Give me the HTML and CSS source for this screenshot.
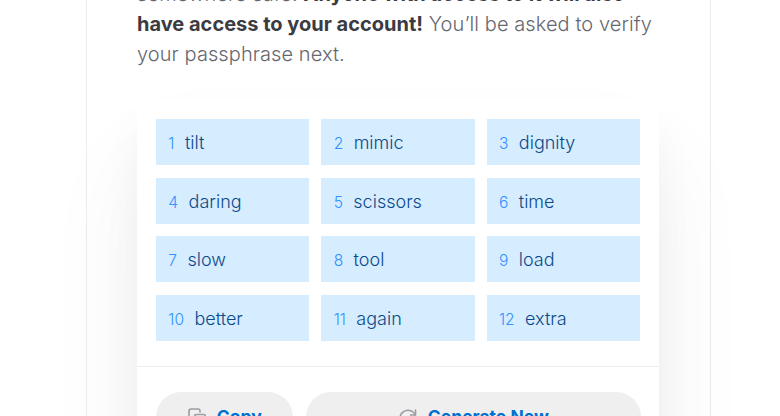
FILE: index.html
```html
<!DOCTYPE html>
<html lang="en">
<head>
<meta charset="utf-8">
<title>Passphrase</title>
<link rel="stylesheet" href="styles.css">
</head>
<body>
<main class="column">
  <p class="intro">somewhere safe. <strong>Anyone with access to it will also<br>have access to your account!</strong> You’ll be asked to verify<br>your passphrase next.</p>
  <section class="card">
    <ol class="words">
      <li class="word"><span class="num">1</span>tilt</li>
      <li class="word"><span class="num">2</span>mimic</li>
      <li class="word"><span class="num">3</span>dignity</li>
      <li class="word"><span class="num">4</span>daring</li>
      <li class="word"><span class="num">5</span>scissors</li>
      <li class="word"><span class="num">6</span>time</li>
      <li class="word"><span class="num">7</span>slow</li>
      <li class="word"><span class="num">8</span>tool</li>
      <li class="word"><span class="num">9</span>load</li>
      <li class="word"><span class="num">10</span>better</li>
      <li class="word"><span class="num">11</span>again</li>
      <li class="word"><span class="num">12</span>extra</li>
    </ol>
    <div class="actions">
      <button class="btn btn-copy">
        <svg class="icon" viewBox="0 0 18 18"><path d="M4.500 12H3A2 2 0 0 1 1 10V3A2 2 0 0 1 3 1H10A2 2 0 0 1 12 3V4"/><rect x="6.500" y="6.500" width="11" height="11" rx="2"/></svg>
        Copy
      </button>
      <button class="btn btn-generate">
        <svg class="icon" viewBox="0 0 18 18"><path d="M16.500 2V7H11.500"/><path d="M16.300 7A8 8 0 1 0 17 11"/></svg>
        Generate New
      </button>
    </div>
  </section>
</main>
</body>
</html>
```

FILE: styles.css
```css
* { box-sizing: border-box; }
body {
  margin: 0;
  height: 416px;
  overflow: hidden;
  background: #fff;
  font-family: Inter, "Liberation Sans", sans-serif;
}
.column {
  display: flow-root;
  width: 625px;
  height: 416px;
  margin-left: 86px;
  border: solid #ededed;
  border-width: 0 1px;
  padding: 0 50px;
}
.intro {
  margin: -21px 0 31px;
  color: #67676f;
  font-size: 20px;
  font-weight: 300;
  letter-spacing: .08px;
  line-height: 30px;
  white-space: nowrap;
}
.intro strong { color: #3b3b42; font-weight: 700; letter-spacing: 0; }
.card {
  width: 522px;
  height: 370px;
  border-radius: 6px;
  background: #fff;
  box-shadow: 0 60px 100px rgba(0, 0, 0, .06), 0 30px 40px rgba(0, 0, 0, .045);
}
.words {
  display: grid;
  grid-template-columns: repeat(3, 1fr);
  gap: 12.500px 12px;
  margin: 0;
  padding: 19px 19px 25px;
  list-style: none;
  border-bottom: 1px solid #ededed;
}
.word {
  display: flex;
  align-items: baseline;
  gap: 10.500px;
  height: 46px;
  padding-left: 12.300px;
  background: #d6ecff;
  color: #0b4a8a;
  font-size: 18px;
  font-weight: 300;
  line-height: 47px;
}
.num { color: #2f90ff; font-size: 15.500px; }
.actions {
  display: flex;
  gap: 13px;
  padding: 25px 18px 0 19px;
}
.btn {
  display: flex;
  align-items: center;
  justify-content: center;
  gap: 10.500px;
  height: 50px;
  padding: 0 0 0 1px;
  border: 0;
  border-radius: 25px;
  background: #efefef;
  color: #0070d1;
  font: 700 17.500px/24px Inter, sans-serif;
}
.btn-copy { width: 137px; }
.btn-generate { flex: 1; }
.icon {
  width: 18px;
  height: 18px;
  fill: none;
  stroke: #9c9ca2;
  stroke-width: 1.600;
  stroke-linecap: round;
  stroke-linejoin: round;
}
```
